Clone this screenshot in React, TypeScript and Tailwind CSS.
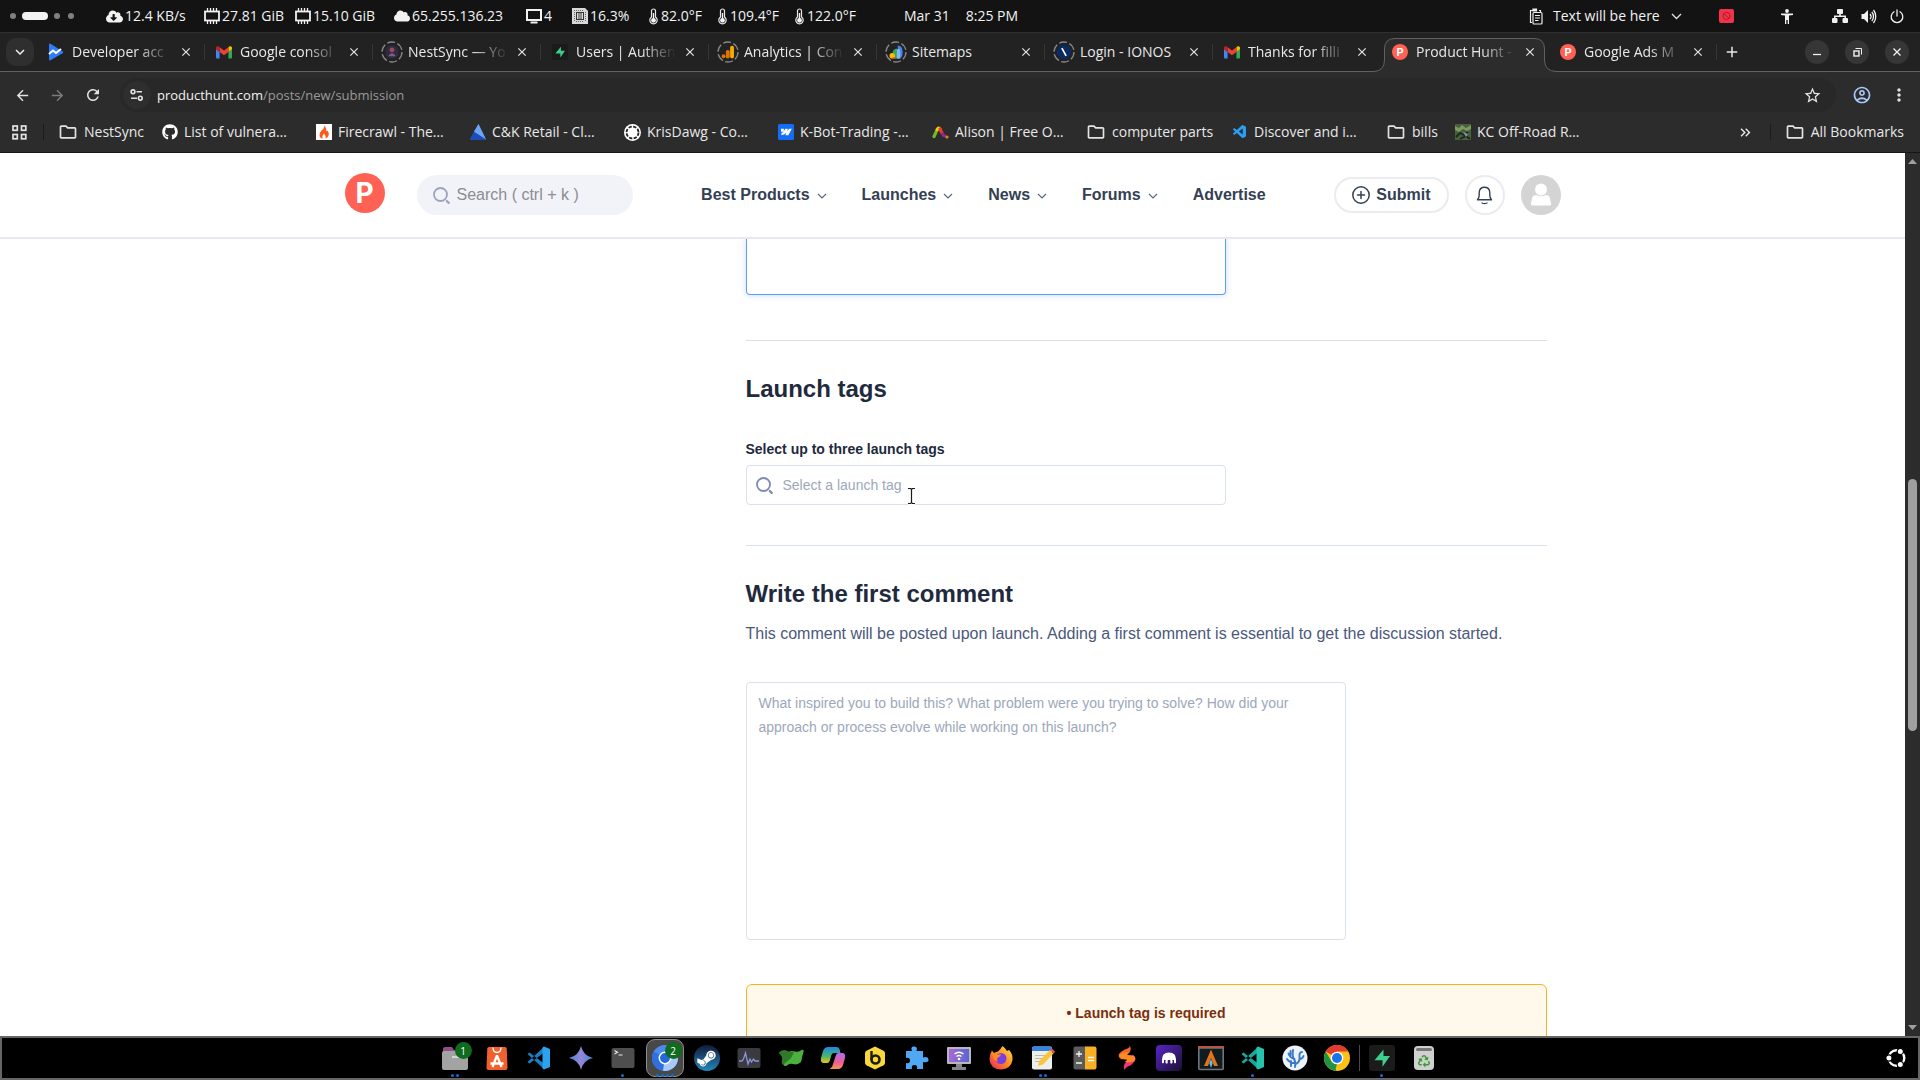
import React from "react";
import { FaCloud, FaCloudDownloadAlt, FaGithub, FaRecycle, FaSteamSymbol } from "react-icons/fa";
import {
	MdAdd,
	MdArrowBack,
	MdArrowForward,
	MdClose,
	MdKeyboardArrowDown,
	MdKeyboardDoubleArrowRight,
	MdMoreVert,
	MdOutlineAccountCircle,
	MdOutlineFolder,
	MdRefresh,
	MdStarOutline,
} from "react-icons/md";
import { VscVscode } from "react-icons/vsc";

type IconProps = { className?: string };

/* ---------- System bar icons ---------- */

const MemoryIcon = () => (
	<svg width="16" height="16" viewBox="0 0 16 16" fill="none" stroke="#f2f2f2">
		<rect x="1" y="3.5" width="14" height="9" strokeWidth="1.8" />
		<path d="M3.5 0v3M6.5 0v3M9.5 0v3M12.5 0v3M3.5 13v3M6.5 13v3M9.5 13v3M12.5 13v3" strokeWidth="1.3" />
	</svg>
);

const MonitorIcon = () => (
	<svg width="16" height="16" viewBox="0 0 16 16" fill="none" stroke="#f2f2f2" strokeWidth="2">
		<rect x="1" y="2" width="14" height="10" />
		<path d="M4.5 14.5h7" />
	</svg>
);

const CpuIcon = () => (
	<svg width="16" height="16" viewBox="0 0 16 16">
		<path d="M0 0h13l3 3v13H0z" fill="#d9d9d9" />
		<path d="M2.500 2v12M13.500 4v10M4 2.500h8M4 13.500h8" stroke="#666" strokeDasharray="1 1" />
		<rect x="4.500" y="4.500" width="7" height="7" fill="#d9d9d9" stroke="#333" />
		<path d="M7 5v6M9 5v6" stroke="#444" />
	</svg>
);

const ThermometerIcon = () => (
	<svg width="11" height="17" viewBox="0 0 11 17" fill="none">
		<path d="M3.500 9V3a2 2 0 0 1 4 0v6a3.700 3.700 0 1 1-4 0z" stroke="#e8e8e8" strokeWidth="1.200" />
		<circle cx="5.500" cy="12.300" r="2.400" fill="#f2f2f2" />
		<path d="M5.500 5v7" stroke="#f2f2f2" strokeWidth="1.400" />
	</svg>
);

const ClipboardIcon = () => (
	<svg width="14" height="17" viewBox="0 0 14 17" fill="none" stroke="#ededed" strokeWidth="1.200">
		<path d="M3 14.500H1.500v-12H4M10 2.500h1.500V4" />
		<path d="M4 1h3.500v2H4z" fill="#ededed" />
		<rect x="4" y="4.500" width="9" height="11.500" rx="1" />
		<path d="M6 7.500h5M6 10h5M6 12.500h3.500" />
	</svg>
);

const RecordIcon = () => (
	<svg width="15" height="14" viewBox="0 0 15 14">
		<rect width="15" height="14" rx="2" fill="#f0354b" />
		<circle cx="7.500" cy="7" r="3.600" fill="none" stroke="#b3152c" />
		<path d="M5 4.500l5 5" stroke="#b3152c" />
	</svg>
);

const PersonIcon = () => (
	<svg width="12" height="15" viewBox="0 0 12 15" fill="#f2f2f2">
		<circle cx="6" cy="2" r="1.900" />
		<path d="M0 4.500h12V6L8 6.500V15H6.700v-4H5.300v4H4V6.500L0 6z" />
	</svg>
);

const NetworkIcon = () => (
	<svg width="16" height="14" viewBox="0 0 16 14" fill="#f2f2f2">
		<rect x="5" y="0" width="6" height="5" rx="1" />
		<rect x="0" y="9" width="5.500" height="5" rx="1" />
		<rect x="10.500" y="9" width="5.500" height="5" rx="1" />
		<path d="M7.200 5h1.600v1.500H14V9h-1.500V8h-9v1H2V6.500h5.200z" />
	</svg>
);

const VolumeIcon = () => (
	<svg width="16" height="15" viewBox="0 0 16 15" fill="none" stroke="#f2f2f2" strokeWidth="1.300">
		<path d="M0.500 5h2.500L7 1v13L3 10H0.500z" fill="#f2f2f2" stroke="none" />
		<path d="M9 5c1.300 1.500 1.300 3.500 0 5M10.800 3c2.200 2.500 2.200 6.500 0 9M12.500 1c3 3.800 3 9.200 0 13" />
	</svg>
);

const PowerIcon = () => (
	<svg width="14" height="15" viewBox="0 0 14 15" fill="none" stroke="#f2f2f2" strokeWidth="1.300" strokeLinecap="round">
		<path d="M7 1v6M4 2.800a5.800 5.800 0 1 0 6 0" />
	</svg>
);

/* ---------- Favicons ---------- */

const PlayConsoleIcon = () => (
	<svg width="16" height="18" viewBox="0 0 16 18">
		<path d="M1 1.500v15q0 1.500 1.500.7L14.500 10.300q1.500-1 0-2L2.500.8Q1 0 1 1.500z" fill="#2f7df6" />
		<path d="M1 11l4-3.500L8 10l5-4" stroke="#fff" strokeWidth="2" fill="none" />
	</svg>
);

const GmailIcon = () => (
	<svg width="16" height="13" viewBox="0 0 16 13">
		<path d="M0 2v9.500q0 1 1 1h2.600V6L0 3z" fill="#4285f4" />
		<path d="M12.400 12.500H15q1 0 1-1V3l-3.600 3z" fill="#34a853" />
		<path d="M12.400 1.200V6L16 3.300V2c0-1.800-2-2.400-3.200-1.300z" fill="#fbbc04" />
		<path d="M3.600 6V1.200L8 4.600l4.400-3.400V6L8 9.300z" fill="#ea4335" />
		<path d="M0 2v1.300L3.600 6V1.200l-.4-.5C2-.4 0 .2 0 2z" fill="#c5221f" />
	</svg>
);

const SupabaseIcon = () => (
	<svg width="16" height="16" viewBox="0 0 26 26">
		<rect width="26" height="26" rx="3" fill="#1b1b1b" />
		<path d="M14.500 4.500L5.500 15.300h8v6.500L21 11h-6.500z" fill="#3fcf8e" />
	</svg>
);

const NestIcon = () => (
	<svg width="16" height="16" viewBox="0 0 16 16">
		<circle cx="8" cy="8" r="8" fill="#302b42" />
		<circle cx="8" cy="5.500" r="2.800" fill="#9c4a5e" />
		<path d="M3.500 13q4.500-7 9 0z" fill="#7b5e92" />
	</svg>
);

const AnalyticsIcon = () => (
	<svg width="16" height="16" viewBox="0 0 16 16">
		<rect x="10.500" y="0.500" width="4.500" height="15" rx="2.200" fill="#f9ab00" />
		<rect x="5.500" y="5.500" width="4.500" height="10" rx="2" fill="#e37400" />
		<circle cx="2.800" cy="13" r="2.300" fill="#e37400" />
	</svg>
);

const SearchConsoleIcon = () => (
	<svg width="16" height="16" viewBox="0 0 16 16">
		<path d="M10 0q6 1 6 8t-5 8z" fill="#4285f4" />
		<path d="M4 16V9q0-4 5-5l3 12z" fill="#34a853" />
		<path d="M9 5q4-3 4 4v7H9z" fill="#8ab4f8" />
		<circle cx="3.500" cy="12.500" r="3.300" fill="#fbbc04" />
		<path d="M4 14.500h4V16H3z" fill="#ea4335" />
	</svg>
);

const IonosIcon = () => (
	<svg width="18" height="18" viewBox="0 0 18 18">
		<circle cx="9" cy="9" r="8.500" fill="#0b2a63" />
		<path d="M6.500 4.500l5 9" stroke="#fff" strokeWidth="2" />
	</svg>
);

const ProductHuntIcon = () => (
	<span className="flex size-4 items-center justify-center rounded-full bg-[#ff6154] font-['Inter',sans-serif] text-[11px] leading-4 font-bold text-white">
		P
	</span>
);

const SleepRing = () => (
	<svg className="absolute inset-0" width="22" height="22" viewBox="0 0 22 22" fill="none">
		<circle cx="11" cy="11" r="10" stroke="#8a8a8a" strokeWidth="1.300" strokeDasharray="8 2.470" />
	</svg>
);

const FirecrawlIcon = () => (
	<svg width="16" height="16" viewBox="0 0 16 16">
		<rect width="16" height="16" fill="#fff" />
		<path d="M8.500 1.500Q8 5 5.500 6.500 3 9 3.500 12q.5 2 3 2.700Q5.500 12 8 9.500q2.500 2.500 1.500 5 2.800-.7 3.200-3.500.3-2.500-1.200-4.500l-1 1Q10.500 4 8.500 1.500z" fill="#fa5d19" />
	</svg>
);

const TriangleIcon = () => (
	<svg width="16" height="16" viewBox="0 0 16 16">
		<path d="M8.500 0L16 15.500H0z" fill="#2f6fe0" />
		<path d="M8.500 0L16 15.500 4 7.500z" fill="#6fa3f7" />
		<path d="M4 8l12 7.500H0z" fill="#1d4db8" />
	</svg>
);

const KrisIcon = () => (
	<svg width="17" height="17" viewBox="0 0 17 17">
		<circle cx="8.500" cy="8.500" r="8.500" fill="#fff" />
		<circle cx="8.500" cy="8.500" r="6" fill="none" stroke="#222" strokeWidth="1.800" strokeDasharray="3.300 1.400" />
		<circle cx="8.500" cy="8.500" r="4.600" fill="#fff" />
	</svg>
);

const WebflowIcon = () => (
	<svg width="16" height="16" viewBox="0 0 16 16">
		<rect width="16" height="16" rx="1.500" fill="#146ef5" />
		<path d="M13.800 4.800l-3.400 6.400H7.300L8.600 8.500Q7 10.800 3.500 11.200V8.800q1.400-.1 2.200-1H3V4.800h2.800v2.400l1.600-2.400h2.200v2.300l1.400-2.300z" fill="#fff" />
	</svg>
);

const AlisonIcon = () => (
	<svg width="17" height="16" viewBox="0 0 17 16" fill="none" strokeWidth="3.200" strokeLinecap="round">
		<path d="M2 12.500L5 6" stroke="#72b62b" />
		<path d="M5.200 5.500Q6.500 3 8 5" stroke="#f9c80e" />
		<path d="M8 5l2 4" stroke="#ee3a2c" />
		<path d="M10.500 10q1 2 2.500 2" stroke="#8e2a8b" />
		<circle cx="15" cy="13" r="0.600" stroke="#f08a1d" strokeWidth="2" />
	</svg>
);

const TrailIcon = () => (
	<svg width="16" height="16" viewBox="0 0 16 16">
		<rect width="16" height="16" fill="#45603a" />
		<path d="M0 2l4 2 3-3 4 3 5-3v4l-4 2-4-2-4 3-4-2z" fill="#7c9a62" />
		<path d="M1 13l4-4 4 2 4-3M5 15l6-3 4 3" stroke="#1c2420" strokeWidth="1.800" fill="none" />
		<path d="M8 8l5 2-2 3z" fill="#7c95a8" />
	</svg>
);

const AppsIcon = () => (
	<svg width="15" height="15" viewBox="0 0 15 15" fill="none" stroke="#e3e3e3" strokeWidth="1.700">
		<rect x="1" y="1" width="4.300" height="4.300" />
		<rect x="9.500" y="1" width="4.300" height="4.300" />
		<rect x="1" y="9.500" width="4.300" height="4.300" />
		<rect x="9.500" y="9.500" width="4.300" height="4.300" />
	</svg>
);

const TuneIcon = () => (
	<svg width="14" height="12" viewBox="0 0 14 12" fill="none" stroke="#e3e3e3" strokeWidth="1.600">
		<circle cx="3" cy="2.800" r="1.900" />
		<path d="M6.500 2.800H12M1 9.200h6" />
		<circle cx="10.300" cy="9.200" r="1.900" />
	</svg>
);

/* ---------- Data ---------- */

const stats = [
	{ icon: <FaCloudDownloadAlt size={17} />, text: "12.4 KB/s", width: "w-[98px]" },
	{ icon: <MemoryIcon />, text: "27.81 GiB", width: "w-[91px]" },
	{ icon: <MemoryIcon />, text: "15.10 GiB", width: "w-[99px]" },
	{ icon: <FaCloud size={16} />, text: "65.255.136.23", width: "w-[132px]" },
	{ icon: <MonitorIcon />, text: "4", width: "w-[46px]" },
	{ icon: <CpuIcon />, text: "16.3%", width: "w-[76px]" },
	{ icon: <ThermometerIcon />, text: "82.0°F", width: "w-[69px]" },
	{ icon: <ThermometerIcon />, text: "109.4°F", width: "w-[77px]" },
	{ icon: <ThermometerIcon />, text: "122.0°F", width: "w-[110px]" },
];

type Tab = {
	title: string;
	icon: React.ReactNode;
	faded?: boolean;
	asleep?: boolean;
	active?: boolean;
};

const tabs: Tab[] = [
	{ title: "Developer acc", icon: <PlayConsoleIcon />, faded: true },
	{ title: "Google consol", icon: <GmailIcon />, faded: true },
	{ title: "NestSync — Yo", icon: <NestIcon />, faded: true, asleep: true },
	{ title: "Users | Authen", icon: <SupabaseIcon />, faded: true },
	{ title: "Analytics | Con", icon: <AnalyticsIcon />, faded: true, asleep: true },
	{ title: "Sitemaps", icon: <SearchConsoleIcon />, asleep: true },
	{ title: "Login - IONOS", icon: <IonosIcon />, asleep: true },
	{ title: "Thanks for filli", icon: <GmailIcon />, faded: true },
	{ title: "Product Hunt -", icon: <ProductHuntIcon />, faded: true, active: true },
	{ title: "Google Ads M", icon: <ProductHuntIcon />, faded: true },
];

const folder = <MdOutlineFolder size={20} className="-mx-0.5 text-[#e3e3e3]" />;

const bookmarks = [
	{ title: "NestSync", icon: folder, style: "w-[102px] gap-2" },
	{ title: "List of vulnera…", icon: <FaGithub size={16} className="text-white" />, style: "w-[154px] gap-1.5" },
	{ title: "Firecrawl - The…", icon: <FirecrawlIcon />, style: "w-[154px] gap-1.5" },
	{ title: "C&K Retail - Cl…", icon: <TriangleIcon />, style: "w-[154px] gap-1.5" },
	{ title: "KrisDawg - Co…", icon: <KrisIcon />, style: "w-[154px] gap-1.5" },
	{ title: "K-Bot-Trading -…", icon: <WebflowIcon />, style: "w-[154px] gap-1.5" },
	{ title: "Alison | Free O…", icon: <AlisonIcon />, style: "w-[156px] gap-1.5" },
	{ title: "computer parts", icon: folder, style: "w-36 gap-2" },
	{ title: "Discover and i…", icon: <VscVscode size={16} className="text-[#2a9df4]" />, style: "w-[156px] gap-1.5" },
	{ title: "bills", icon: folder, style: "w-[67px] gap-2" },
	{ title: "KC Off-Road R…", icon: <TrailIcon />, style: "w-[154px] gap-1.5" },
];

/* ---------- Browser ---------- */

const SystemBar = () => (
	<header className="flex h-[33px] shrink-0 items-center border-b border-[#303030] bg-[#131313] text-[#f2f2f2]">
		<div className="flex w-[106px] shrink-0 items-center gap-2 pl-2.5">
			<span className="size-1.5 rounded-full bg-[#808080]" />
			<span className="-mx-0.5 h-2 w-[26px] rounded-full bg-[#f2f2f2]" />
			<span className="size-1.5 rounded-full bg-[#808080]" />
			<span className="size-1.5 rounded-full bg-[#808080]" />
		</div>
		{stats.map((stat) => (
			<div key={stat.text} className={`flex shrink-0 items-center gap-0.5 whitespace-nowrap ${stat.width}`}>
				{stat.icon}
				<span>{stat.text}</span>
			</div>
		))}
		<div className="flex gap-4 whitespace-nowrap">
			<span>Mar 31</span>
			<span>8:25 PM</span>
		</div>
		<div className="ml-auto flex items-center pr-4">
			<ClipboardIcon />
			<span className="ml-2.5 w-[118px] whitespace-nowrap">Text will be here</span>
			<svg width="11" height="7" viewBox="0 0 11 7" fill="none" stroke="#e3e3e3" strokeWidth="1.300">
				<path d="M1 1l4.500 4.500L10 1" />
			</svg>
			<div className="ml-[37px] flex items-center">
				<RecordIcon />
			</div>
			<div className="ml-[47px] flex items-center">
				<PersonIcon />
			</div>
			<div className="ml-[39px] flex items-center gap-[13px]">
				<NetworkIcon />
				<VolumeIcon />
				<PowerIcon />
			</div>
		</div>
	</header>
);

const TabItem: React.FC<{ tab: Tab; divider: boolean }> = ({ tab, divider }) => (
	<div className="relative flex h-7 w-[168px] shrink-0 items-center pr-3 pl-2">
		{/* Active tab outline, it covers the line under the strip */}
		{tab.active && (
			<svg className="absolute -left-2 top-0 z-0" width="184" height="34" viewBox="0 0 184 34">
				<path d="M0 33.500Q11.500 33.500 11.500 22V11Q11.500 .5 22 .5H161Q171.500 .5 171.500 11V22Q171.500 33.500 184 33.500V34H0z" fill="#2c2c2c" />
				<path d="M0 33.500Q11.500 33.500 11.500 22V11Q11.500 .5 22 .5H161Q171.500 .5 171.500 11V22Q171.500 33.500 184 33.500" fill="none" stroke="#616161" />
			</svg>
		)}
		<span className="relative flex size-[22px] shrink-0 items-center justify-center">
			{tab.asleep ? (
				<>
					<SleepRing />
					<span className="scale-[0.85]">{tab.icon}</span>
				</>
			) : (
				tab.icon
			)}
		</span>
		<span
			className={
				tab.faded
					? "relative ml-[5px] w-[100px] whitespace-nowrap text-[#e8e8e8] [mask-image:linear-gradient(to_right,black_65%,transparent_100%)]"
					: "relative ml-[5px] w-[100px] whitespace-nowrap text-[#e8e8e8]"
			}
		>
			{tab.title}
		</span>
		<button aria-label={`Close ${tab.title}`} className="relative ml-auto text-[#e8e8e8]">
			<MdClose size={14} />
		</button>
		{divider && <span className="absolute right-0 top-1.5 h-4 w-px bg-[#363636]" />}
	</div>
);

const windowButton = "flex size-6 items-center justify-center rounded-full bg-[#363636] text-[#f0f0f0]";

const TabStrip = () => (
	<div className="flex h-[39px] shrink-0 border-b border-[#616161] bg-[#222222] pt-[5px]">
		<button aria-label="Search tabs" className="ml-1.5 mr-[3px] flex size-7 shrink-0 items-center justify-center rounded-[10px] bg-[#2f2f2f] text-[#f0f0f0]">
			<MdKeyboardArrowDown size={18} />
		</button>
		{tabs.map((tab, index) => (
			<TabItem key={index} tab={tab} divider={!tab.active && !tabs[index + 1]?.active} />
		))}
		<button aria-label="New tab" className="ml-1.5 flex h-7 items-center text-[#e8e8e8]">
			<MdAdd size={18} />
		</button>
		<div className="ml-auto flex h-7 items-center gap-4 pr-[11px]">
			<button aria-label="Minimize" className={windowButton}>
				<svg width="8" height="8" viewBox="0 0 8 8" stroke="currentColor">
					<path d="M0 6.500h8" strokeWidth="1.300" />
				</svg>
			</button>
			<button aria-label="Restore" className={windowButton}>
				<svg width="9" height="9" viewBox="0 0 9 9" fill="none" stroke="currentColor">
					<path d="M2.500.5h6v6" />
					<rect x="1" y="3" width="5" height="5" strokeWidth="1.400" />
				</svg>
			</button>
			<button aria-label="Close" className={windowButton}>
				<svg width="8" height="8" viewBox="0 0 8 8" stroke="currentColor" strokeWidth="1.300">
					<path d="M.5.500l7 7M7.500.500l-7 7" />
				</svg>
			</button>
		</div>
	</div>
);

const Toolbar = () => (
	<div className="shrink-0 border-b border-[#161616] bg-[#2c2c2c] pt-1.5">
		<div className="flex h-[34px] items-center text-[#e3e3e3]">
			<div className="flex w-[120px] shrink-0 items-center gap-[18px] pl-3.5">
				<button aria-label="Back">
					<MdArrowBack size={17} />
				</button>
				<button aria-label="Forward" className="text-[#7d7d7d]">
					<MdArrowForward size={17} />
				</button>
				<button aria-label="Reload">
					<MdRefresh size={18} />
				</button>
			</div>
			<div className="flex h-[34px] flex-1 items-center rounded-full bg-[#282828] pl-[3px] pr-3.5">
				<button aria-label="Site information" className="flex size-7 shrink-0 items-center justify-center rounded-full bg-[#2e2e2e]">
					<TuneIcon />
				</button>
				<p className="ml-1.5 flex-1 whitespace-nowrap text-[13px] text-[#9a9a9a]">
					<span className="text-[#f2f2f2]">producthunt.com</span>/posts/new/submission
				</p>
				<button aria-label="Bookmark this page">
					<MdStarOutline size={19} />
				</button>
			</div>
			<div className="flex w-[84px] shrink-0 items-center gap-[17px] pl-4">
				<button aria-label="Profile" className="text-[#a8c7fa]">
					<MdOutlineAccountCircle size={20} />
				</button>
				<button aria-label="Menu">
					<MdMoreVert size={20} />
				</button>
			</div>
		</div>
		<nav className="flex h-10 items-center text-[#e8e8e8]">
			<div className="flex w-[60px] shrink-0 items-center gap-4 pl-3">
				<AppsIcon />
				<span className="h-4 w-px bg-[#1c1c1c]" />
			</div>
			{bookmarks.map((bookmark) => (
				<a key={bookmark.title} href="#" className={`flex shrink-0 items-center whitespace-nowrap ${bookmark.style}`}>
					{bookmark.icon}
					<span>{bookmark.title}</span>
				</a>
			))}
			<div className="ml-auto flex items-center pr-4">
				<MdKeyboardDoubleArrowRight size={17} />
				<span className="mx-4 h-4 w-px bg-[#1c1c1c]" />
				<a href="#" className="flex items-center gap-2 whitespace-nowrap">
					{folder}
					All Bookmarks
				</a>
			</div>
		</nav>
	</div>
);

/* ---------- Product Hunt page ---------- */

const SearchIcon: React.FC<IconProps> = ({ className }) => (
	<svg className={className} width="17" height="17" viewBox="0 0 17 17" fill="none" stroke="currentColor" strokeWidth="1.800" strokeLinecap="round">
		<circle cx="7.500" cy="7.500" r="6.500" />
		<path d="M13.800 14l1.900 1.900" strokeWidth="2.200" />
	</svg>
);

const navItems = ["Best Products", "Launches", "News", "Forums", "Advertise"];

const SiteHeader = () => (
	<header className="flex h-[86px] shrink-0 border-b-2 border-[#e8e8ee] bg-white">
		<div className="mx-auto flex w-full max-w-[1216px] items-center">
			<a href="#" aria-label="Product Hunt" className="mb-1 flex size-10 items-center justify-center rounded-full bg-[#ff6154] font-['Inter',sans-serif] text-[28px] leading-10 font-bold text-white">
				P
			</a>
			<label className="ml-8 flex h-10 w-[216px] items-center gap-[7px] rounded-full bg-[#f2f3f8] px-4">
				<SearchIcon className="shrink-0 text-[#9ca4bd]" />
				<input
					type="text"
					aria-label="Search"
					placeholder="Search ( ctrl + k )"
					className="w-full min-w-0 bg-transparent text-base outline-none placeholder:text-[#8c8c92]"
				/>
			</label>
			<nav className="flex flex-1 items-center justify-center gap-8 font-bold text-[#344054]">
				{navItems.map((item) => (
					<a key={item} href="#" className="flex items-center gap-1.5">
						{item}
						{item !== "Advertise" && (
							<svg className="mr-0.5 mt-0.5" width="12" height="8" viewBox="0 0 12 8" fill="none" stroke="#5a6785" strokeWidth="1.200">
								<path d="M2 2l4 4 4-4" />
							</svg>
						)}
					</a>
				))}
			</nav>
			<div className="flex items-center gap-4">
				<button className="flex h-9 items-center gap-1.5 rounded-full border-2 border-[#ebebf0] px-4 font-bold text-[#344054]">
					<svg width="18" height="18" viewBox="0 0 18 18" fill="none" stroke="currentColor" strokeWidth="1.500" strokeLinecap="round">
						<circle cx="9" cy="9" r="8.200" />
						<path d="M9 5.500v7M5.500 9h7" />
					</svg>
					Submit
				</button>
				<button aria-label="Notifications" className="flex size-10 items-center justify-center rounded-full border-2 border-[#ebebf0] text-[#344054]">
					<svg width="17" height="19" viewBox="0 0 17 19" fill="none" stroke="currentColor" strokeWidth="1.400" strokeLinecap="round" strokeLinejoin="round">
						<path d="M1.500 13.800q1.700-1.800 1.700-4.500V6.500Q3.500 1.200 8.500 1.200t5.300 5.300v2.800q0 2.700 1.700 4.500z" />
						<path d="M6 17q2.500 1.300 5 0" />
					</svg>
				</button>
				<button aria-label="Account">
					<svg width="40" height="40" viewBox="0 0 40 40">
						<circle cx="20" cy="20" r="20" fill="#d4d4d4" />
						<circle cx="20" cy="14.500" r="6" fill="#fff" />
						<path d="M11.500 30.500q-2 0-1.500-2.500l1-4.500q.8-3.500 4-3.500 5 2.500 10 0 3.200 0 4 3.500l1 4.500q.5 2.500-1.500 2.500z" fill="#fff" />
					</svg>
				</button>
			</div>
		</div>
	</header>
);

const SubmissionForm = () => (
	<main className="mx-auto w-full max-w-[1216px] min-h-0 flex-1 overflow-hidden pr-3.5 pl-[401px] text-[#21293c]">
		<textarea
			aria-label="Description"
			className="block h-14 w-full max-w-[480px] resize-none rounded-b border border-t-0 border-[#5e9bff] shadow-[0_0_6px_1px_#d6e5ff] outline-none"
		/>
		<hr className="mt-[45px] border-[#d9e1ec]" />

		<section className="pt-8">
			<h2 className="text-2xl font-bold">Launch tags</h2>
			<label htmlFor="launch-tag" className="mt-8 block text-sm leading-6 font-bold">
				Select up to three launch tags
			</label>
			<div className="relative mt-1 flex h-10 max-w-[480px] items-center gap-2.5 rounded border border-[#d9e1ec] px-[9px]">
				<SearchIcon className="shrink-0 text-[#7d89b0]" />
				<input
					id="launch-tag"
					type="text"
					placeholder="Select a launch tag"
					className="w-full bg-transparent text-sm outline-none placeholder:text-[#9ca8ba]"
				/>
				{/* Mouse pointer */}
				<svg className="absolute left-40 top-[21px]" width="9" height="18" viewBox="0 0 9 18" fill="none">
					<path d="M1 1.500h2.500l1 1 1-1H8M4.500 2.500v13M1 16.500h2.500l1-1 1 1H8" stroke="#fff" strokeWidth="3" />
					<path d="M1 1.500h2.500l1 1 1-1H8M4.500 2.500v13M1 16.500h2.500l1-1 1 1H8" stroke="#1a1a1a" strokeWidth="1.200" />
				</svg>
			</div>
		</section>
		<hr className="mt-10 border-[#d9e1ec]" />

		<section className="pt-8">
			<h2 className="text-2xl font-bold">Write the first comment</h2>
			<p className="mt-3 text-[#4b587c]">
				This comment will be posted upon launch. Adding a first comment is essential to get the discussion started.
			</p>
			<textarea
				aria-label="First comment"
				placeholder="What inspired you to build this? What problem were you trying to solve? How did your approach or process evolve while working on this launch?"
				className="mt-9 block h-[258px] w-full max-w-[600px] resize-none rounded border border-[#d9e1ec] px-3 py-2 text-sm leading-6 outline-none placeholder:text-[#9ca8ba]"
			/>
		</section>

		<div className="mt-11 rounded-md border border-[#fdb022] bg-[#fff9eb] pt-4 pb-24 text-center text-sm leading-6 font-bold text-[#7a2e0e]">
			<p>• Launch tag is required</p>
		</div>
	</main>
);

const Scrollbar = () => (
	<div className="flex w-[15px] shrink-0 flex-col items-center bg-[#2c2c2c] py-1.5">
		<svg width="9" height="5" viewBox="0 0 9 5" fill="#9f9f9f">
			<path d="M0 5L4.500 0 9 5z" />
		</svg>
		<div className="flex-[315]" />
		<div className="h-[252px] w-[9px] rounded-full bg-[#9f9f9f]" />
		<div className="flex-[294]" />
		<svg width="9" height="5" viewBox="0 0 9 5" fill="#9f9f9f">
			<path d="M0 0h9L4.500 5z" />
		</svg>
	</div>
);

/* ---------- Dock ---------- */

type DockApp = {
	name: string;
	icon: React.ReactNode;
	windows?: number;
	badge?: string;
	active?: boolean;
};

const DockSvg: React.FC<{ children: React.ReactNode }> = ({ children }) => (
	<svg width="26" height="26" viewBox="0 0 26 26">
		{children}
	</svg>
);

const VsCodeShape: React.FC<{ back: string; front: string }> = ({ back, front }) => (
	<DockSvg>
		<path d="M1.500 9l2-1.500L18 18.500V24zM1.500 17l2 1.500L18 7.500V2z" fill={back} />
		<path d="M18 1.500l6 2.500v18l-6 2.500-1.500-1V2.500z" fill={front} />
	</DockSvg>
);

const dockApps: DockApp[] = [
	{
		name: "Files",
		windows: 2,
		badge: "1",
		icon: (
			<DockSvg>
				<path d="M1 4q0-2 2-2h7l2 3h11v8H1z" fill="#924d8b" />
				<rect y="6" width="26" height="19" rx="2" fill="#a3a3a3" />
				<path d="M10 12h7" stroke="#e4e4e4" strokeWidth="1.500" />
			</DockSvg>
		),
	},
	{
		name: "App Center",
		icon: (
			<DockSvg>
				<path d="M5 2h16q1.500 0 1.700 1.500l.8 19q0 2.500-2 2.500h-17q-2 0-2-2.500l.8-19Q3.500 2 5 2z" fill="#f0622d" />
				<path d="M9 2.500q0 5 4 5t4-5" stroke="#fff" strokeWidth="1.300" fill="none" />
				<path d="M13 10.500L8.500 22M13 10.500L17.500 22M6.500 18.500h13" stroke="#fff" strokeWidth="2.300" fill="none" />
			</DockSvg>
		),
	},
	{ name: "Visual Studio Code", icon: <VsCodeShape back="#1b7fc4" front="#2ba3ee" /> },
	{
		name: "Gemini",
		icon: (
			<DockSvg>
				<linearGradient id="gemini" x1="0" x2="1">
					<stop offset="0" stopColor="#4f86cf" />
					<stop offset=".5" stopColor="#9486d8" />
					<stop offset="1" stopColor="#3f86d0" />
				</linearGradient>
				<path d="M13 1q2.200 9.800 12 12-9.800 2.200-12 12-2.200-9.800-12-12 9.800-2.200 12-12z" fill="url(#gemini)" />
			</DockSvg>
		),
	},
	{
		name: "Terminal",
		windows: 1,
		icon: (
			<DockSvg>
				<rect x="1.500" y="3" width="23" height="20" rx="2" fill="#4e4e4e" />
				<path d="M4.500 5.500l3 1.700-3 1.700M8.500 10h4" stroke="#e8e8e8" strokeWidth="1.200" fill="none" />
			</DockSvg>
		),
	},
	{
		name: "Chromium",
		windows: 4,
		badge: "2",
		active: true,
		icon: (
			<DockSvg>
				<circle cx="13" cy="13" r="13" fill="#4c8bea" />
				<path d="M13 13L1.700 6.500A13 13 0 0 0 11 25.800z" fill="#2f6fe0" />
				<path d="M13 13h13A13 13 0 0 1 11 25.800z" fill="#a9c8fa" />
				<circle cx="13" cy="13" r="5.700" fill="#2667d9" stroke="#fff" strokeWidth="1.500" />
			</DockSvg>
		),
	},
	{
		name: "Steam",
		icon: (
			<span className="flex size-[26px] items-center justify-center rounded-full bg-linear-to-b from-[#101c3c] to-[#2189bd] text-white">
				<FaSteamSymbol size={21} />
			</span>
		),
	},
	{
		name: "System Monitor",
		icon: (
			<DockSvg>
				<rect x="1.500" y="3" width="23" height="20" rx="2" fill="#3b3b3f" />
				<path d="M3 16h3l1.500-2 2-6 2.500 11 2-5 1.500 3 2-3 1.500 2h4" stroke="#8a94d6" strokeWidth="1.300" fill="none" />
			</DockSvg>
		),
	},
	{
		name: "Wave",
		icon: (
			<DockSvg>
				<path d="M9 8q4-3 8-1.500 4 1 6.500-1.500 2.500-1 2.200 1.500-.7 2.500-1.500 5-.5 3.500-1.200 5.500-3.500 3.500-8 2-4-1-6 1.500-3 1.500-3.500-1z" fill="#4bb03c" />
				<path d="M.5 8Q4 4 8.500 5.500q4 2.500 7.500.5-1.500 7-6 9.500-2.500 1.500-4.500 4.500Q3 19 4 15.500 5 11 .5 8z" fill="#2f7a29" />
			</DockSvg>
		),
	},
	{
		name: "Copilot",
		icon: (
			<DockSvg>
				<linearGradient id="copilot-a" x1="0" y1="0" x2="0" y2="1">
					<stop offset="0" stopColor="#1e86e5" />
					<stop offset=".6" stopColor="#4cb86a" />
					<stop offset="1" stopColor="#f2c511" />
				</linearGradient>
				<linearGradient id="copilot-b" x1="0" y1="0" x2="0" y2="1">
					<stop offset="0" stopColor="#b06cf0" />
					<stop offset=".6" stopColor="#ef5c94" />
					<stop offset="1" stopColor="#f79a4c" />
				</linearGradient>
				<path d="M8 2h9q2 0 2.700 2.500L20.500 8H14q-2 0-2.600 2l-1.700 6Q9 18 7 18H4q-4 0-3-5l2-7Q4.500 2 8 2z" fill="url(#copilot-a)" />
				<path d="M18 24H9.500l2.500-2 4-12q.5-2 2.500-2H22q4 0 3 5l-2 7q-1.500 4-5 4z" fill="url(#copilot-b)" />
			</DockSvg>
		),
	},
	{
		name: "Beekeeper",
		icon: (
			<DockSvg>
				<path d="M13 1.500l8.500 4.200q1.500.8 1.500 2.300v10q0 1.500-1.500 2.300L13 24.500l-8.500-4.200Q3 19.500 3 18V8q0-1.500 1.500-2.300z" fill="#fad83b" />
				<path d="M9.500 6v9" stroke="#1c1c1c" strokeWidth="2.400" />
				<circle cx="13.500" cy="14.500" r="4" stroke="#1c1c1c" strokeWidth="2.600" fill="none" />
			</DockSvg>
		),
	},
	{
		name: "Extensions",
		icon: (
			<DockSvg>
				<path d="M2 6h6Q6 1.500 10 1.500T12.500 6H19v6.500q5-1.500 5.500 2T19 17v7h-6q1-4-2.500-4T8 24H2v-6q4 1 4-2.500T2 13z" fill="#50a8f5" />
			</DockSvg>
		),
	},
	{
		name: "Remote Desktop",
		icon: (
			<DockSvg>
				<linearGradient id="remote" x1="0" x2="1">
					<stop offset="0" stopColor="#a968d6" />
					<stop offset="1" stopColor="#5a66cf" />
				</linearGradient>
				<rect x="1" y="2" width="24" height="17" rx="1" fill="#b8b8bc" />
				<rect x="3" y="4" width="20" height="13" fill="url(#remote)" />
				<path d="M10 19h6v3h4v3H6v-3h4z" fill="#85858a" />
				<path d="M8.500 9q4.500-3.500 9 0M10.500 11.500q2.500-2 5 0" stroke="#fff" strokeWidth="1.400" fill="none" />
				<circle cx="13" cy="14" r="1.300" fill="#fff" />
			</DockSvg>
		),
	},
	{
		name: "Firefox",
		icon: (
			<DockSvg>
				<linearGradient id="firefox" x1="1" y1="0" x2="0" y2="1">
					<stop offset="0" stopColor="#ffe14d" />
					<stop offset=".5" stopColor="#ff8a1f" />
					<stop offset="1" stopColor="#e8215f" />
				</linearGradient>
				<path d="M14.500 1q3 2 4.500 5l2-1q4 4 3.500 10-1.500 9-11.500 9.500Q2 24 1.500 14 1.500 9 4 5.500L6 8q2-1.500 4-1.500Q12 5 14.500 1z" fill="url(#firefox)" />
				<circle cx="13" cy="13.500" r="5.500" fill="#7a3fe0" />
				<path d="M3 8q3-1 6 1.500h4q0 2-3 3-2 1.500 0 4-4-1-4.500-4z" fill="#ff8a1f" />
			</DockSvg>
		),
	},
	{
		name: "Text Editor",
		windows: 2,
		icon: (
			<DockSvg>
				<rect x="2" y="1.500" width="20" height="23" rx="2" fill="#eeeeea" />
				<path d="M2 6V3.500Q2 1.500 4 1.500h16q2 0 2 2V6z" fill="#3584e4" />
				<path d="M5 10.500h11M5 13.500h8M5 16.500h6" stroke="#b9b9b4" />
				<path d="M9 16L20 5l3.500 3.500L13 19.500 8 21z" fill="#f9c440" />
				<path d="M20 5l1.700-1.700 3.500 3.500-1.700 1.700z" fill="#e0575b" />
			</DockSvg>
		),
	},
	{
		name: "Calculator",
		icon: (
			<DockSvg>
				<path d="M3.500 1.500H13v23H3.500q-2 0-2-2v-19q0-2 2-2z" fill="#5c5c5c" />
				<path d="M13 1.500h9.500q2 0 2 2v19q0 2-2 2H13z" fill="#f9b023" />
				<path d="M4 9h6M7 6v6M4 18h6M16 12.500h6M16 15.500h6" stroke="#f4f4f4" strokeWidth="1.300" />
			</DockSvg>
		),
	},
	{
		name: "Flame",
		icon: (
			<DockSvg>
				<path d="M16 0.500Q17.500 4 16 7L8 14.500Q3.500 12.500 5 9 8 5 13.500 3.500 16 2.500 16 0.500z" fill="#f5642c" />
				<path d="M10.500 25.500Q9 22 10.500 19l8.500-9q3.500 2.500 2 6-3 4-8 6-2.500 1.500-2.500 3.500z" fill="#f0357a" />
				<path d="M5 10.500Q8 6 15.500 7.500q-3 1.500-2 2.500l6 .5q3.500 3 0 6-4.500 1.500-9 .5 3-1.500 2-2.500-6 .5-7.500-4.500z" fill="#ff8a21" />
			</DockSvg>
		),
	},
	{
		name: "Kraken",
		icon: (
			<DockSvg>
				<linearGradient id="kraken" x1="0" y1="0" x2="1" y2="1">
					<stop offset="0" stopColor="#5a23c8" />
					<stop offset="1" stopColor="#1a1030" />
				</linearGradient>
				<rect width="26" height="26" rx="4" fill="url(#kraken)" />
				<path d="M6 18v-3.500q0-7 7-7t7 7V18q-2 1-2-1v-2h-1.500v3q-1.500 1-2.200 0v-3h-2.600v3q-.7 1-2.200 0v-3H8v2q0 2-2 1z" fill="#fff" />
			</DockSvg>
		),
	},
	{
		name: "Alacritty",
		icon: (
			<DockSvg>
				<rect y="1" width="26" height="3" fill="#d9461f" />
				<rect x=".8" y="3" width="24.400" height="21.500" rx="1" fill="#101c20" stroke="#6f767a" strokeWidth="1.600" />
				<path d="M13 4.500L6 21h4l3-8 3 8h4z" fill="#e57317" />
				<path d="M13 14l-1.700 4L13 23l1.700-5z" fill="#58c4f0" />
			</DockSvg>
		),
	},
	{ name: "VSCode Insiders", windows: 1, icon: <VsCodeShape back="#18a99d" front="#26c3ac" /> },
	{
		name: "VSCodium",
		icon: (
			<DockSvg>
				<circle cx="13" cy="13" r="12.500" fill="#eef3f8" />
				<path d="M13 22q1-5-1-8t-1-9M12.500 14Q8 13 6.500 8.500M13.500 18Q8 18.500 5 14M14 19q4-2 3.500-7t2.500-5M17.500 14q3 0 4-3M9 16v5M8.500 11V6" stroke="#3a78c8" strokeWidth="1.900" fill="none" strokeLinecap="round" />
			</DockSvg>
		),
	},
	{
		name: "Google Chrome",
		icon: (
			<DockSvg>
				<circle cx="13" cy="13" r="13" fill="#fbc116" />
				<path d="M13 13L1.700 6.500a13 13 0 0 1 22.600 0H13z" fill="#e33b2e" />
				<path d="M1.700 6.500L9 19l3.500 7A13 13 0 0 1 1.700 6.500z" fill="#229342" />
				<path d="M7.500 16.500l5.500 3-2 6.300z" fill="#229342" />
				<circle cx="13" cy="13" r="6.300" fill="#fff" />
				<circle cx="13" cy="13" r="5" fill="#1a73e8" />
			</DockSvg>
		),
	},
];

const pinnedApps: DockApp[] = [
	{
		name: "Supabase",
		windows: 1,
		icon: (
			<DockSvg>
				<rect width="26" height="26" rx="3" fill="#1b1b1b" />
				<path d="M14.500 4.500L5.500 15.300h8v6.500L21 11h-6.500z" fill="#3fcf8e" />
			</DockSvg>
		),
	},
	{
		name: "Trash",
		icon: (
			<span className="flex h-6 w-5 flex-col items-center gap-1 rounded-sm bg-[#d0d0d0] pt-0.5 text-[#3a9b2f]">
				<span className="h-[3px] w-4 rounded-full bg-[#777777]" />
				<FaRecycle size={12} />
			</span>
		),
	},
];

const DockItem: React.FC<{ app: DockApp }> = ({ app }) => (
	<button aria-label={app.name} className="relative flex h-10 w-[42px] shrink-0 items-center justify-center">
		<span
			className={
				app.active
					? "flex size-[38px] items-center justify-center rounded-[9px] border border-[#8d8d8d] bg-[#484848]"
					: "flex size-[38px] items-center justify-center"
			}
		>
			{app.icon}
		</span>
		{app.badge && (
			<span className="absolute right-1 top-1 flex size-[17px] items-center justify-center rounded-full bg-[#0f6b1d] text-[10px] leading-4 text-white">
				{app.badge}
			</span>
		)}
		{app.windows && (
			<span className="absolute bottom-px flex gap-0.5">
				{Array.from({ length: app.windows }, (_, i) => (
					<span key={i} className="size-[3px] rounded-full bg-[#0f6fd6]" />
				))}
			</span>
		)}
	</button>
);

const Dock = () => (
	<footer className="flex h-11 shrink-0 items-center border-2 border-[#666666] bg-black">
		<div className="flex flex-1 items-center justify-center pl-0.5">
			{dockApps.map((app) => (
				<DockItem key={app.name} app={app} />
			))}
			<span className="mx-px h-[26px] w-px bg-[#4a4a4a]" />
			{pinnedApps.map((app) => (
				<DockItem key={app.name} app={app} />
			))}
		</div>
		<button aria-label="Show applications" className="flex w-11 shrink-0 justify-center">
			<svg width="20" height="20" viewBox="0 0 20 20">
				<circle cx="10.500" cy="10" r="7.800" fill="none" stroke="#fff" strokeWidth="2.400" />
				<g fill="#fff" stroke="#000" strokeWidth="1.200">
					<circle cx="2.900" cy="10" r="3.100" />
					<circle cx="14.300" cy="3.400" r="3.100" />
					<circle cx="14.300" cy="16.600" r="3.100" />
				</g>
			</svg>
		</button>
	</footer>
);

export default function App() {
	return (
		<div className="flex h-screen flex-col overflow-hidden bg-white font-['Open_Sans','Noto_Sans',sans-serif] text-sm">
			<SystemBar />
			<TabStrip />
			<Toolbar />
			<div className="flex min-h-0 flex-1">
				<div className="flex min-w-0 flex-1 flex-col font-['Liberation_Sans',Arial,sans-serif] text-base">
					<SiteHeader />
					<SubmissionForm />
				</div>
				<Scrollbar />
			</div>
			<Dock />
		</div>
	);
}
